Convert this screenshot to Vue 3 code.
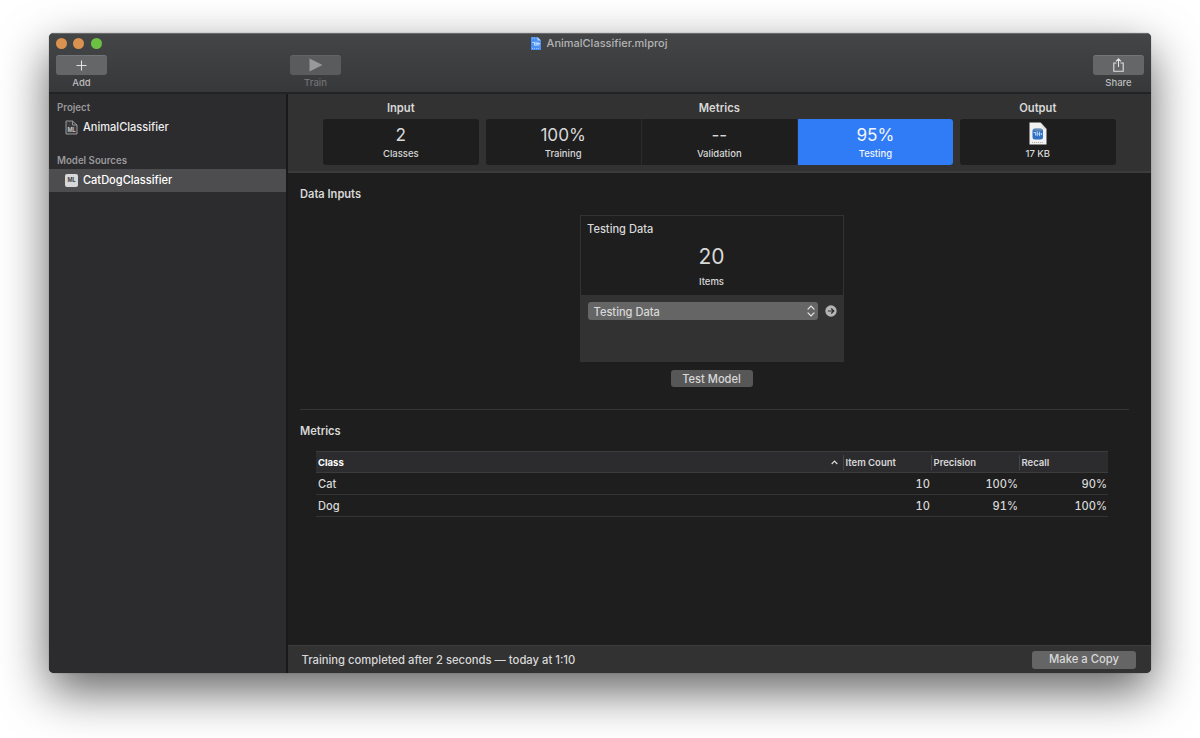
<script setup>
import { ref } from 'vue'

const metricTiles = [
  { id: 'training', value: '100%', label: 'Training' },
  { id: 'validation', value: '--', label: 'Validation' },
  { id: 'testing', value: '95%', label: 'Testing' },
]

const rows = [
  { name: 'Cat', count: 10, precision: '100%', recall: '90%' },
  { name: 'Dog', count: 10, precision: '91%', recall: '100%' },
]

const activeTile = ref('testing')
</script>

<template>
  <div class="desktop">
    <div class="window">
      <header class="titlebar">
        <div class="title-row">
          <div class="lights">
            <span class="light close"></span>
            <span class="light minimize"></span>
            <span class="light zoom"></span>
          </div>
          <div class="title">
            <svg class="title-icon" width="10" height="13" viewBox="0 0 10 13">
              <path d="M0 0h6.5L10 3.5V13H0z" fill="#4a90f5" />
              <path d="M6.5 0L10 3.5H6.5z" fill="#b5d3fb" />
              <path d="M1.2 5.5h2.3v3M5 4.5v4.5M5 6.8h3M7 5v4M8.6 6v1.6" fill="none" stroke="#e6f0ff" stroke-width="0.8" />
              <path d="M1 11.5h8M1 1.2h4.5" stroke="#b5d3fb" stroke-width="0.8" stroke-dasharray="1 1" />
            </svg>
            <span>AnimalClassifier.mlproj</span>
          </div>
        </div>
        <div class="tools">
          <div class="tool">
            <button class="tool-btn">
              <svg width="11" height="11" viewBox="0 0 11 11">
                <path d="M5.5 0.5v10M0.5 5.5h10" stroke="#e2e2e2" stroke-width="1.1" />
              </svg>
            </button>
            <span class="tool-label">Add</span>
          </div>
          <div class="tool train">
            <button class="tool-btn">
              <svg width="14" height="14" viewBox="0 0 14 14">
                <path d="M0.5 0.5L13.5 7L0.5 13.5z" fill="#98999a" />
              </svg>
            </button>
            <span class="tool-label">Train</span>
          </div>
          <div class="tool share">
            <button class="tool-btn">
              <svg width="11" height="14" viewBox="0 0 11 14">
                <path d="M3.5 5H0.8v8.2h9.4V5H7.5M5.5 9V1M3 3.4L5.5 0.9L8 3.4" fill="none" stroke="#e2e2e2" stroke-width="1.1" />
              </svg>
            </button>
            <span class="tool-label">Share</span>
          </div>
        </div>
      </header>

      <div class="body">
        <aside class="sidebar">
          <div class="group">Project</div>
          <div class="item">
            <svg width="13" height="15" viewBox="0 0 13 15">
              <path d="M1 1h6.5L12 5v9H1z" fill="#3a3a3c" stroke="#98989a" stroke-width="1" stroke-linejoin="round" />
              <path d="M7.5 1v4H12" fill="none" stroke="#98989a" stroke-width="0.9" />
              <text x="6.6" y="12.2" text-anchor="middle" class="ml light-ml">ML</text>
            </svg>
            <span>AnimalClassifier</span>
          </div>
          <div class="group second">Model Sources</div>
          <div class="item selected">
            <svg width="13" height="15" viewBox="0 0 13 15">
              <rect x="0" y="1" width="13" height="13" rx="2" fill="#d6d7d9" />
              <text x="6.5" y="9.4" text-anchor="middle" class="ml dark-ml">ML</text>
            </svg>
            <span>CatDogClassifier</span>
          </div>
        </aside>

        <main class="content">
          <section class="summary">
            <div class="block single">
              <h3>Input</h3>
              <div class="tiles">
                <div class="tile">
                  <span class="value">2</span>
                  <span class="label">Classes</span>
                </div>
              </div>
            </div>
            <div class="block triple">
              <h3>Metrics</h3>
              <div class="tiles">
                <div
                  v-for="tile in metricTiles"
                  :key="tile.id"
                  class="tile"
                  :class="{ active: activeTile === tile.id }"
                  @click="activeTile = tile.id"
                >
                  <span class="value">{{ tile.value }}</span>
                  <span class="label">{{ tile.label }}</span>
                </div>
              </div>
            </div>
            <div class="block single">
              <h3>Output</h3>
              <div class="tiles">
                <div class="tile">
                  <span class="value">
                    <svg class="file-icon" width="18" height="23" viewBox="0 0 18 23">
                      <path d="M0.5 0.5h11L17.5 7v15.5H0.5z" fill="#f1f1f1" />
                      <path d="M11.5 0.5L17.5 7h-3z" fill="#d8d8d8" />
                      <rect x="3.5" y="6.5" width="10.5" height="11" rx="2.5" fill="#2f6fc4" />
                      <path d="M4.5 7.8h8.5" stroke="#6d8ca8" stroke-width="1.8" />
                      <path d="M4.6 10.5h2v3M8.2 9.2v5M8.2 12h3.2M10.6 9.6v4.6M12.6 11v2" fill="none" stroke="#b9dcff" stroke-width="1" />
                      <path d="M3 20.5h11" stroke="#aaaaaa" stroke-width="0.9" stroke-dasharray="1.2 0.8" />
                    </svg>
                  </span>
                  <span class="label">17 KB</span>
                </div>
              </div>
            </div>
          </section>

          <section class="inputs">
            <h3>Data Inputs</h3>
            <div class="card">
              <div class="card-top">
                <div class="card-title">Testing Data</div>
                <div class="card-value">20</div>
                <div class="card-label">Items</div>
              </div>
              <div class="card-bottom">
                <div class="select">
                  <span>Testing Data</span>
                  <svg width="8" height="12" viewBox="0 0 8 12">
                    <path d="M1 4.2L4 1.2l3 3M1 7.8l3 3 3-3" fill="none" stroke="#e6e6e6" stroke-width="1.2" stroke-linecap="round" />
                  </svg>
                </div>
                <svg width="12" height="12" viewBox="0 0 12 12">
                  <circle cx="6" cy="6" r="5.7" fill="#b4b4b4" />
                  <path d="M2.8 6h5.8M6.2 3.5L8.8 6L6.2 8.5" fill="none" stroke="#303030" stroke-width="1.2" />
                </svg>
              </div>
            </div>
            <button class="btn test">Test Model</button>
          </section>

          <section class="metrics">
            <h3>Metrics</h3>
            <div class="table">
              <div class="row head">
                <span class="sorted">
                  Class
                  <svg width="7" height="5" viewBox="0 0 7 5">
                    <path d="M0.7 4L3.5 1.2L6.3 4" fill="none" stroke="#dddddd" stroke-width="1.2" />
                  </svg>
                </span>
                <span class="col">Item Count</span>
                <span class="col">Precision</span>
                <span class="col">Recall</span>
              </div>
              <div v-for="row in rows" :key="row.name" class="row">
                <span>{{ row.name }}</span>
                <span class="num">{{ row.count }}</span>
                <span class="num">{{ row.precision }}</span>
                <span class="num">{{ row.recall }}</span>
              </div>
            </div>
          </section>

          <footer class="status">
            <span>Training completed after 2 seconds — today at 1:10</span>
            <button class="btn copy">Make a Copy</button>
          </footer>
        </main>
      </div>
    </div>
  </div>
</template>

<style>
body {
  margin: 0;
  background: #fff;
}
</style>

<style scoped>
* {
  box-sizing: border-box;
}

.desktop {
  width: 1200px;
  height: 738px;
  padding: 33px 49px 0;
  overflow: hidden;
  background: #fff;
  font-family: Inter, "Liberation Sans", sans-serif;
  font-size: 11.1px;
  font-weight: 500;
  color: #d8d8d8;
}

.window {
  width: 1102px;
  height: 640px;
  display: flex;
  flex-direction: column;
  border-radius: 5px;
  overflow: hidden;
  background: #1e1e1e;
  box-shadow: 0 0 1px rgba(0, 0, 0, 0.6), 0 18px 48px rgba(0, 0, 0, 0.62);
}

button {
  border: 0;
  padding: 0;
  font: inherit;
  color: inherit;
}

h3 {
  margin: 0;
  font-size: 11.2px;
  font-weight: 600;
  line-height: 14px;
}

svg {
  display: block;
  flex: none;
}

.titlebar {
  height: 61px;
  flex: none;
  background: linear-gradient(#444546, #37383a);
  border-top: 1px solid #6a6b6c;
  border-bottom: 2px solid #222324;
}

.title-row {
  height: 18px;
  display: grid;
  grid-template-columns: 1fr auto 1fr;
  align-items: center;
}

.lights {
  display: flex;
  gap: 6.6px;
  padding-left: 6.5px;
}

.light {
  width: 11px;
  height: 11px;
  border-radius: 50%;
}

.close,
.minimize {
  background: #db9250;
}

.zoom {
  background: #6cc044;
}

.title {
  display: flex;
  align-items: center;
  gap: 6px;
  margin-right: 2px;
  font-size: 11px;
  color: #b2b3b4;
}

.tools {
  display: flex;
  padding: 3px 7px 0;
}

.tool {
  width: 51px;
  display: flex;
  flex-direction: column;
  align-items: center;
}

.tool-btn {
  width: 51px;
  height: 20px;
  display: flex;
  align-items: center;
  justify-content: center;
  padding-bottom: 1px;
  border-radius: 3px;
  background: #656668;
  border-top: 1px solid #747577;
}

.tool-label {
  margin-top: 2px;
  font-size: 9.5px;
  line-height: 12px;
  color: #bcbdbe;
}

.train {
  margin-left: 183px;
}

.train .tool-btn {
  background: #5a5b5c;
  border-top-color: #636465;
}

.train .tool-label {
  color: #717273;
}

.share {
  margin-left: auto;
}

.body {
  flex: 1;
  display: flex;
  min-height: 0;
}

.sidebar {
  width: 239px;
  flex: none;
  padding-top: 6px;
  background: #2c2c2f;
  border-right: 2px solid #19191a;
}

.group {
  padding-left: 8px;
  font-size: 9.7px;
  line-height: 15px;
  font-weight: 600;
  color: #98989a;
}

.second {
  margin-top: 14px;
}

.item {
  height: 23px;
  margin-top: 1px;
  padding: 0 0 1px 16px;
  display: flex;
  align-items: center;
  gap: 5px;
  font-size: 11.05px;
  line-height: 15px;
  color: #ededed;
}

.selected {
  background: #4d4d4f;
  color: #fff;
}

.ml {
  font-size: 5.5px;
  font-weight: 700;
}

.light-ml {
  fill: #c4c4c6;
}

.dark-ml {
  fill: #444446;
}

.content {
  flex: 1;
  display: flex;
  flex-direction: column;
}

.summary {
  height: 79px;
  flex: none;
  display: flex;
  gap: 7px;
  padding: 7px 0 0 35px;
  background: #323232;
  border-bottom: 2px solid #3c3c3c;
}

.block {
  text-align: center;
}

.single {
  width: 155.6px;
}

.triple {
  width: 467.4px;
}

.tiles {
  display: flex;
  gap: 1px;
  height: 46px;
  margin-top: 4px;
  border-radius: 3px;
  overflow: hidden;
  background: #2b2b2b;
}

.tile {
  flex: 1;
  display: flex;
  flex-direction: column;
  align-items: center;
  background: #1e1e1e;
}

.active {
  background: #2f7cf6;
  color: #f2f5fa;
}

.value {
  height: 28px;
  padding-top: 5px;
  font-size: 17.2px;
  font-weight: 400;
  line-height: 22px;
}

.label {
  font-size: 9.5px;
  line-height: 14px;
}

.file-icon {
  margin-top: -2px;
}

.inputs {
  display: flex;
  flex-direction: column;
  align-items: center;
  height: 237px;
  margin: 0 22px 0 12px;
  padding-top: 14px;
  border-bottom: 1px solid #353535;
}

.inputs h3 {
  align-self: flex-start;
}

.card {
  width: 264px;
  height: 147px;
  margin: 14px 0 0 -6px;
  border: 1px solid #333;
  display: flex;
  flex-direction: column;
}

.card-top {
  height: 79px;
  padding: 5px 6.5px 0;
}

.card-title {
  line-height: 16px;
}

.card-value {
  margin-top: 7px;
  font-size: 21px;
  font-weight: 400;
  line-height: 26px;
  text-align: center;
}

.card-label {
  margin-top: 5px;
  font-size: 9.5px;
  line-height: 14px;
  text-align: center;
}

.card-bottom {
  flex: 1;
  display: flex;
  align-items: flex-start;
  gap: 7px;
  padding: 7px 6px 0 7px;
  background: #323232;
}

.card-bottom > svg {
  margin-top: 3px;
}

.select {
  width: 230px;
  height: 18px;
  display: flex;
  align-items: center;
  justify-content: space-between;
  padding: 0 3px 0 6px;
  border-radius: 3px;
  background: #656565;
  line-height: 16px;
}

.select span {
  padding-top: 1px;
}

.btn {
  height: 18px;
  border-radius: 3px;
  background: #656565;
  line-height: 18px;
  text-align: center;
}

.test {
  width: 82px;
  height: 17px;
  margin: 8px 0 0 -6px;
  background: #575757;
}

.metrics {
  flex: 1;
  padding: 14px 43px 0 12px;
}

.metrics h3,
.inputs h3 {
  font-size: 11.1px;
}

.table {
  margin: 13px 0 0 16px;
}

.row {
  height: 22px;
  display: grid;
  grid-template-columns: 527px 88px 88px 89px;
  align-items: center;
  line-height: 15px;
  padding-top: 2px;
  border-bottom: 1px solid #343434;
}

.row > span:first-child {
  padding-left: 2px;
}

.head {
  height: 22px;
  padding-top: 0;
  background: #2c2c2f;
  border-top: 1px solid #3b3b3c;
  border-bottom: 1px solid #3b3b3c;
  font-size: 9.5px;
  font-weight: 600;
}

.sorted {
  display: flex;
  align-items: center;
  justify-content: space-between;
  padding-right: 5px;
  font-weight: 700;
  color: #fff;
}

.col {
  border-left: 1px solid #464648;
  padding-left: 1.5px;
  line-height: 15px;
}

.num {
  padding-right: 1px;
  text-align: right;
  font-variant-numeric: tabular-nums;
}

.status {
  height: 28px;
  flex: none;
  display: flex;
  align-items: center;
  justify-content: space-between;
  padding: 0 15px 0 13.5px;
  background: #323232;
  border-top: 1px solid #3d3d3d;
  font-size: 11.25px;
}

.copy {
  width: 104px;
  line-height: 17px;
}
</style>
